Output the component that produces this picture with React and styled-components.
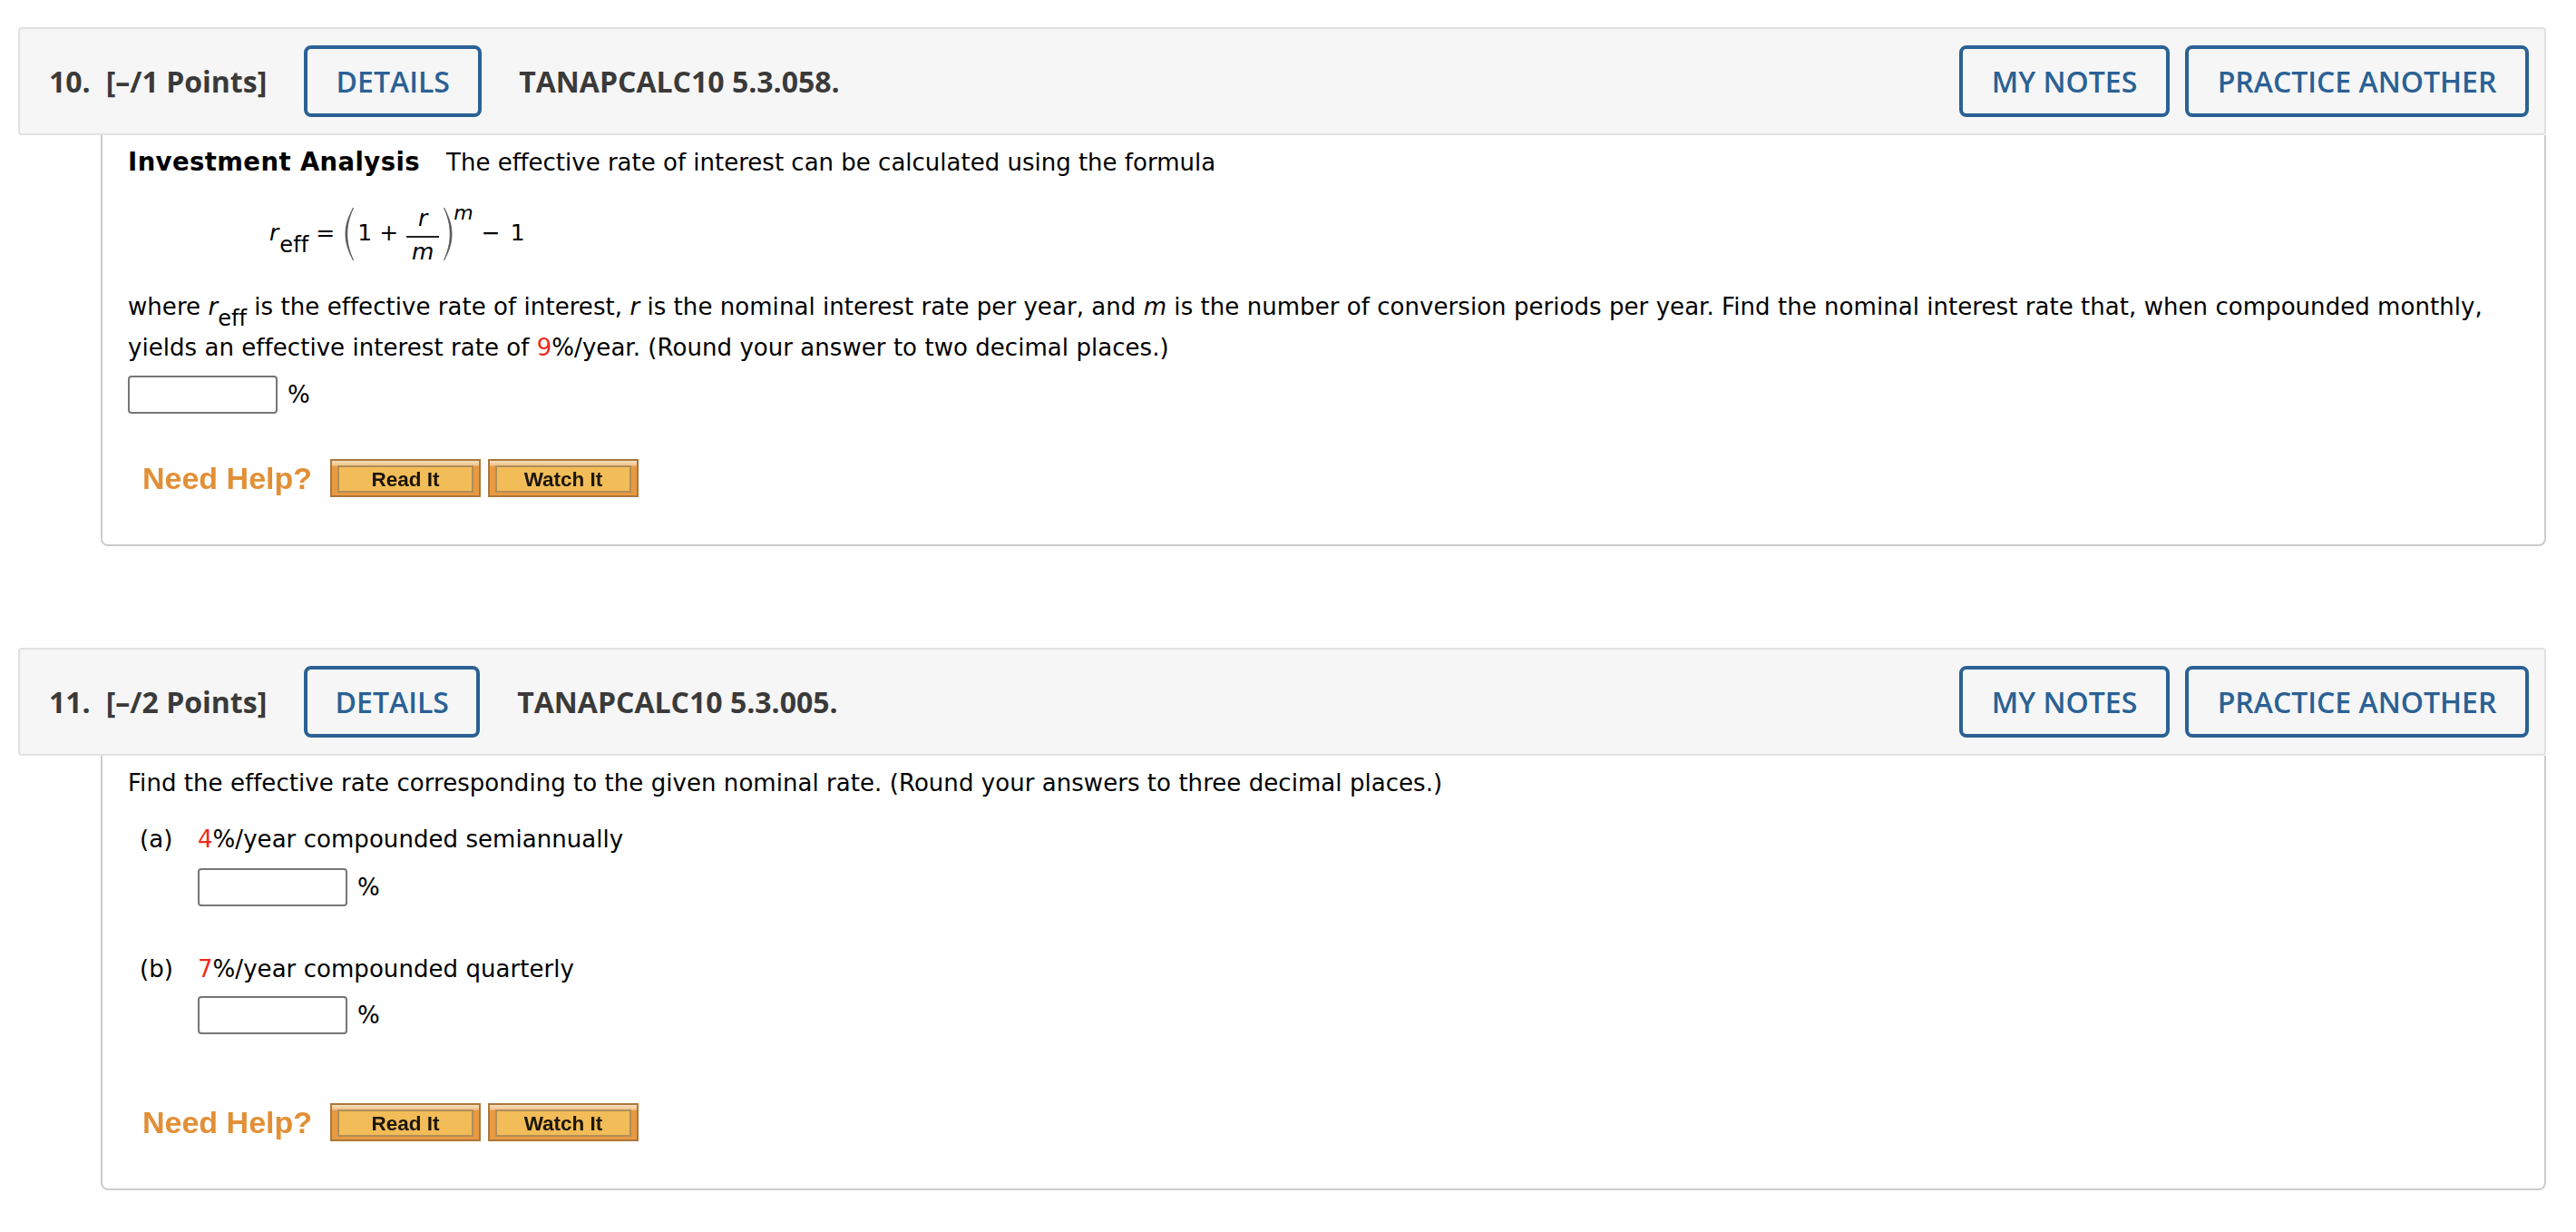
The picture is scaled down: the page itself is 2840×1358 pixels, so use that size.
import React from 'react';
import styled, { createGlobalStyle } from 'styled-components';

const GlobalStyle = createGlobalStyle`
  html, body { margin: 0; padding: 0; background: #fff; }
  body { font-family: "DejaVu Sans", Verdana, sans-serif; color: #000; }
`;

const Page = styled.div`
  width: 2840px;
  padding: 30px 0 0 20px;
  box-sizing: border-box;
`;

const Question = styled.section`
  width: 2787px;
  & + & { margin-top: 112px; }
`;

const Header = styled.header`
  display: flex;
  align-items: center;
  box-sizing: border-box;
  height: 119px;
  padding: 0 17px 0 32px;
  background: #f6f6f6;
  border: 2px solid #e1e1e1;
  border-radius: 4px;
  font-family: "Open Sans", sans-serif;
  font-size: 32px;
  font-weight: 700;
  color: #3a3a3a;
`;

const QuestionNumber = styled.span`
  margin-right: 17px;
`;

const Points = styled.span`
  margin-right: 41px;
`;

const Title = styled.span`
  margin-left: 41px;
`;

const Actions = styled.div`
  display: flex;
  gap: 17px;
  margin-left: auto;
`;

const OutlineButton = styled.button`
  box-sizing: border-box;
  height: 79px;
  width: ${(p) => p.$width}px;
  padding: 0;
  background: transparent;
  border: 4px solid #2a6194;
  border-radius: 8px;
  font-family: "Open Sans", sans-serif;
  font-size: 32px;
  font-weight: 600;
  color: #2a6194;
`;

const Body = styled.div`
  box-sizing: border-box;
  margin-left: 91px;
  padding: 8px 0 52px 28px;
  background: #fff;
  border: 2px solid #cccccc;
  border-top: 0;
  border-radius: 0 0 8px 8px;
  font-size: 26px;
  line-height: 45px;
  letter-spacing: 0.05px;
`;

const Para = styled.p`
  margin: 0;
  letter-spacing: ${(p) => (p.$tight ? '0' : 'inherit')};
`;

const Strong = styled.strong`
  font-size: 27.5px;
  font-weight: 700;
  line-height: 1;
  letter-spacing: 0.4px;
  margin-right: 29px;
`;

const Red = styled.span`
  color: #ee2c1c;
`;

const Var = styled.i`
  font-style: italic;
`;

const Sub = styled.sub`
  font-size: 24px;
  line-height: 0;
  vertical-align: -12px;
  font-style: normal;
`;

const Formula = styled.div`
  display: flex;
  align-items: flex-start;
  height: 60px;
  margin: 26px 0 28px 156px;
  font-size: 25px;
  line-height: 1;
`;

const FormulaVar = styled.i`
  margin-top: 16px;
`;

const FormulaSub = styled.span`
  margin: 30px 0 0 1px;
  font-size: 24px;
`;

const Op = styled.span`
  margin: 16px ${(p) => p.$right}px 0 ${(p) => p.$left}px;
`;

const Fraction = styled.span`
  display: flex;
  flex-direction: column;
  align-items: center;
  width: 36px;
  font-style: italic;
`;

const FractionTop = styled.span`
  height: 34px;
  width: 100%;
  text-align: center;
  border-bottom: 2px solid #222;
  box-sizing: border-box;
`;

const FractionBottom = styled.span`
  padding-top: 3px;
`;

const Sup = styled.i`
  font-size: 22px;
  margin-top: -4px;
`;

const ParenIcon = styled.svg`
  flex: none;
  margin-left: ${(p) => p.$left}px;
  transform: ${(p) => (p.$flip ? 'scaleX(-1)' : 'none')};
`;

const AnswerRow = styled.div`
  display: flex;
  align-items: center;
  gap: 11px;
  height: 42px;
  margin: ${(p) => p.$top || 8}px 0 0 ${(p) => p.$left || 0}px;
  line-height: 42px;
`;

const AnswerInput = styled.input`
  box-sizing: border-box;
  width: 165px;
  height: 42px;
  padding: 0;
  background: #fff;
  border: 2px solid #767676;
  border-radius: 4px;
`;

const PartRow = styled.div`
  display: flex;
  margin: ${(p) => p.$top}px 0 0 13px;
`;

const PartLabel = styled.span`
  width: 64px;
`;

const HelpRow = styled.div`
  display: flex;
  align-items: center;
  margin: ${(p) => p.$top}px 0 0 16px;
`;

const HelpLabel = styled.span`
  margin-right: 20px;
  font-family: "Liberation Sans", Arial, sans-serif;
  font-size: 34px;
  font-weight: 700;
  letter-spacing: 0;
  line-height: 42px;
  color: #e28f36;
  filter: blur(0.6px);
`;

const HelpButton = styled.button`
  box-sizing: border-box;
  display: flex;
  width: 166px;
  height: 42px;
  margin-right: 8px;
  padding: 5px 6px 3px;
  background: linear-gradient(#f5dfc0 0, #f0c48c 5px, #e89a42 6px, #e89a42 100%);
  border: 2px solid #ac773b;
`;

const HelpFace = styled.span`
  flex: 1;
  box-sizing: border-box;
  background: #f2bc58;
  border: 2px solid #b08e58;
  font-family: "Liberation Sans", Arial, sans-serif;
  font-size: 22.5px;
  font-weight: 700;
  line-height: 27px;
  text-align: center;
  color: #1c1608;
  filter: blur(0.4px);
`;

const Paren = ({ flip, left }) => (
  <ParenIcon width="12" height="60" viewBox="0 0 12 60" $flip={flip} $left={left}>
    <path d="M10.5 1C3.5 14 2 22 2 30s1.5 16 8.5 29C5 46 3.8 38 3.8 30S5 14 10.5 1Z" fill="#555" stroke="#555" strokeWidth="0.8" />
  </ParenIcon>
);

const Help = ({ top }) => (
  <HelpRow $top={top}>
    <HelpLabel>Need Help?</HelpLabel>
    <HelpButton><HelpFace>Read It</HelpFace></HelpButton>
    <HelpButton><HelpFace>Watch It</HelpFace></HelpButton>
  </HelpRow>
);

const QuestionHeader = ({ number, points, code }) => (
  <Header>
    <QuestionNumber>{number}.</QuestionNumber>
    <Points>[–/{points} Points]</Points>
    <OutlineButton $width={number === 10 ? 196 : 194}>DETAILS</OutlineButton>
    <Title>{code}</Title>
    <Actions>
      <OutlineButton $width={232}>MY NOTES</OutlineButton>
      <OutlineButton $width={379}>PRACTICE ANOTHER</OutlineButton>
    </Actions>
  </Header>
);

const Answer = ({ top, left }) => (
  <AnswerRow $top={top} $left={left}>
    <AnswerInput type="text" />
    <span>%</span>
  </AnswerRow>
);

export default function App() {
  return (
    <Page>
      <GlobalStyle />
      <Question>
        <QuestionHeader number={10} points={1} code="TANAPCALC10 5.3.058." />
        <Body>
          <Para $tight>
            <Strong>Investment Analysis</Strong>
            The effective rate of interest can be calculated using the formula
          </Para>
          <Formula>
            <FormulaVar>r</FormulaVar>
            <FormulaSub>eff</FormulaSub>
            <Op $left={8} $right={0}>=</Op>
            <Paren left={10} />
            <Op $left={3} $right={0}>1</Op>
            <Op $left={8} $right={9}>+</Op>
            <Fraction>
              <FractionTop>r</FractionTop>
              <FractionBottom>m</FractionBottom>
            </Fraction>
            <Paren flip left={4} />
            <Sup>m</Sup>
            <Op $left={9} $right={11}>−</Op>
            <Op $left={0} $right={0}>1</Op>
          </Formula>
          <Para>
            where <Var>r</Var><Sub>eff</Sub> is the effective rate of interest, <Var>r</Var> is the nominal interest rate per year, and <Var>m</Var> is the number of conversion periods per year. Find the nominal interest rate that, when compounded monthly, yields an effective interest rate of <Red>9</Red>%/year. (Round your answer to two decimal places.)
          </Para>
          <Answer />
          <Help top={50} />
        </Body>
      </Question>
      <Question>
        <QuestionHeader number={11} points={2} code="TANAPCALC10 5.3.005." />
        <Body>
          <Para>Find the effective rate corresponding to the given nominal rate. (Round your answers to three decimal places.)</Para>
          <PartRow $top={17}>
            <PartLabel>(a)</PartLabel>
            <span><Red>4</Red>%/year compounded semiannually</span>
          </PartRow>
          <Answer left={77} top={9} />
          <PartRow $top={47}>
            <PartLabel>(b)</PartLabel>
            <span><Red>7</Red>%/year compounded quarterly</span>
          </PartRow>
          <Answer left={77} top={7} />
          <Help top={76} />
        </Body>
      </Question>
    </Page>
  );
}
